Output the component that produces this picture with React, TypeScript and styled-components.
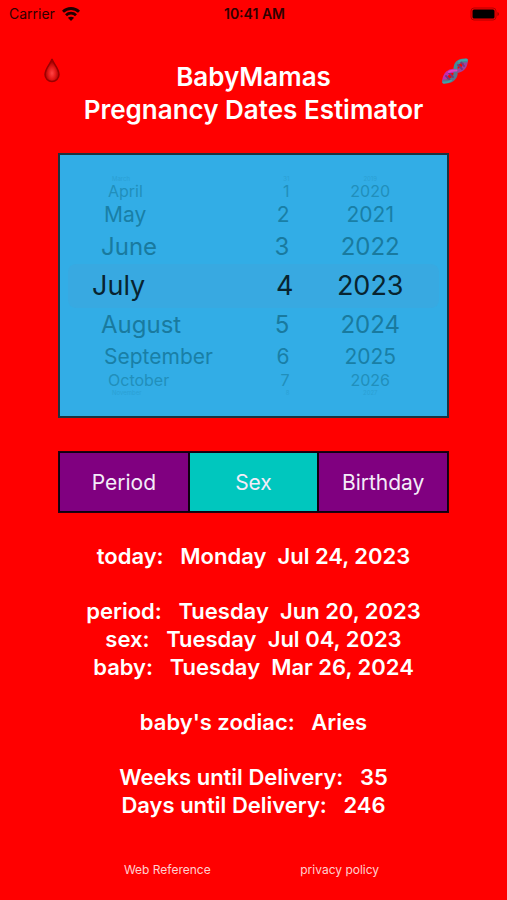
import React, { useState } from "react";
import styled, { createGlobalStyle } from "styled-components";

const GlobalStyle = createGlobalStyle`
  *, *::before, *::after { box-sizing: border-box; }
  body {
    margin: 0;
    background: #ff0000;
    color: #ffffff;
    font-family: Inter, "Liberation Sans", sans-serif;
  }
  button { font-family: inherit; cursor: pointer; }
`;

const Screen = styled.div`
  display: flex;
  flex-direction: column;
  min-height: 100vh;
  background: #ff0000;
`;

const StatusBar = styled.div`
  display: grid;
  grid-template-columns: 1fr auto 1fr;
  align-items: center;
  height: 28px;
  padding: 0 7px 0 9px;
  color: #300000;
  font-size: 14px;
  line-height: 16px;
`;

const Carrier = styled.span`
  display: flex;
  align-items: center;
  gap: 7px;
`;

const Clock = styled.time`
  font-weight: 600;
`;

const Battery = styled.span`
  display: flex;
  justify-content: flex-end;
`;

const Header = styled.header`
  display: flex;
  justify-content: space-between;
  align-items: flex-start;
  padding: 27px 36px 0;
`;

const IconButton = styled.button`
  display: flex;
  flex: none;
  width: 32px;
  height: 32px;
  padding: 0;
  border: 0;
  background: none;
  align-items: center;
  justify-content: center;
`;

const Title = styled.h1`
  flex: 1;
  margin: 5px 0 0;
  text-align: center;
  white-space: nowrap;
  font-size: 26px;
  font-weight: 600;
  line-height: 33px;
`;

const TitleLine = styled.span`
  display: block;
`;

const Main = styled.main`
  display: flex;
  flex-direction: column;
  margin-top: 27px;
`;

const Picker = styled.section`
  display: grid;
  grid-template-columns: 41fr 15fr 33fr;
  margin: 0 58px;
  padding: 20px 8px 19px;
  border: 2px solid #1c3340;
  background: #32ade6;
`;

const Wheel = styled.div`
  display: flex;
  flex-direction: column;
`;

const depths = [
  { height: 44, size: 27, color: "#082430", inset: 0 },
  { height: 34, size: 24, color: "#197a9f", inset: 9 },
  { height: 30, size: 21, color: "#197fa6", inset: 12 },
  { height: 17, size: 16, color: "#218fbb", inset: 16 },
  { height: 8, size: 6, color: "#2ba0d4", inset: 20 },
];

type Align = "left" | "right" | "center";

const WheelItem = styled.button<{ $depth: number; $align: Align }>`
  display: block;
  width: 100%;
  height: ${(p) => depths[p.$depth].height}px;
  border: 0;
  padding: 0 ${(p) => (p.$align === "right" ? 8 + (p.$depth ? 4 : 0) : 0)}px 0
    ${(p) => (p.$align === "left" ? 24 + depths[p.$depth].inset : 0)}px;
  background: ${(p) => (p.$depth === 0 ? "#38a9e1" : "transparent")};
  border-radius: ${(p) =>
    p.$depth !== 0 || p.$align === "right" ? "0" : p.$align === "left" ? "8px 0 0 8px" : "0 8px 8px 0"};
  color: ${(p) => depths[p.$depth].color};
  font-size: ${(p) => depths[p.$depth].size}px;
  line-height: ${(p) => depths[p.$depth].height}px;
  text-align: ${(p) => p.$align};
  white-space: nowrap;
`;

const Segments = styled.div`
  display: grid;
  grid-template-columns: repeat(3, 1fr);
  margin: 33px 58px 0;
  border: 1px solid #200010;
`;

const Segment = styled.button<{ $active: boolean }>`
  height: 60px;
  padding: 0;
  border: 1px solid #100010;
  background: ${(p) => (p.$active ? "#00c7be" : "#800080")};
  color: #f4ecf8;
  font-size: 21px;
  font-weight: 400;
`;

const Results = styled.div`
  display: flex;
  flex-direction: column;
  gap: 27px;
  margin-top: 29px;
  text-align: center;
  font-size: 22px;
  font-weight: 600;
  line-height: 28px;
`;

const Group = styled.div`
  display: flex;
  flex-direction: column;
`;

const Line = styled.p`
  margin: 0;
  white-space: pre;
`;

const Footer = styled.footer`
  display: grid;
  grid-template-columns: 1fr 1fr;
  justify-items: center;
  margin-top: auto;
  padding: 0 16% 22px;
  font-size: 12px;
  line-height: 16px;
`;

const FooterLink = styled.a`
  color: #ffd0d0;
  text-decoration: none;
`;

const wheels: { label: string; align: Align; items: string[] }[] = [
  {
    label: "Month",
    align: "left",
    items: ["March", "April", "May", "June", "July", "August", "September", "October", "November"],
  },
  { label: "Day", align: "right", items: ["31", "1", "2", "3", "4", "5", "6", "7", "8"] },
  {
    label: "Year",
    align: "center",
    items: ["2019", "2020", "2021", "2022", "2023", "2024", "2025", "2026", "2027"],
  },
];

const groups = [
  ["today:   Monday  Jul 24, 2023"],
  ["period:   Tuesday  Jun 20, 2023", "sex:   Tuesday  Jul 04, 2023", "baby:   Tuesday  Mar 26, 2024"],
  ["baby's zodiac:   Aries"],
  ["Weeks until Delivery:   35", "Days until Delivery:   246"],
];

const WifiIcon = () => (
  <svg width="18" height="14" viewBox="0 0 18 14" fill="none" stroke="#200000" strokeWidth="2.8" aria-hidden="true">
    <path d="M1 4.8C5.4.4 12.6.4 17 4.800" />
    <path d="M4 8.200c2.800-2.700 7.200-2.700 10 0" />
    <path d="M9 14 5.900 10.800c1.700-1.500 4.500-1.500 6.200 0Z" fill="#200000" stroke="none" />
  </svg>
);

const BatteryIcon = () => (
  <svg width="30" height="14" viewBox="0 0 30 14" aria-hidden="true">
    <rect x="1" y="1" width="25" height="12" rx="3" fill="none" stroke="#b00000" />
    <rect x="2.500" y="2.500" width="22" height="9" rx="1.500" fill="#000" />
    <path d="M27.500 5v4c1.800-.7 1.800-3.300 0-4Z" fill="#900000" />
  </svg>
);

const DropIcon = () => (
  <svg width="18" height="26" viewBox="0 0 18 26" aria-hidden="true">
    <defs>
      <radialGradient id="drop" cx="50%" cy="63%" r="50%">
        <stop offset="0" stopColor="#ff4545" />
        <stop offset="0.5" stopColor="#e91b1b" />
        <stop offset="1" stopColor="#a80000" />
      </radialGradient>
    </defs>
    <path
      d="M9 1C8 5 2 10.500 2 16.500a7 7 0 0 0 14 0C16 10.500 10 5 9 1Z"
      fill="url(#drop)"
      stroke="#990000"
      strokeWidth="1.500"
    />
  </svg>
);

const DnaIcon = () => (
  <svg width="30" height="30" viewBox="0 0 30 30" fill="none" strokeLinecap="round" aria-hidden="true">
    <g strokeWidth="4">
      <path d="M26 4.500C25.500 11 22 15 16 15" stroke="#a0429c" />
      <path d="M26 4.500C18 4 15 8 15.500 14.500" stroke="#438c99" />
      <path d="M15 15C9 14 5 18 4 25.500" stroke="#c52bb0" />
      <path d="M15.500 15.500C16.500 21 12 26 4 25.500" stroke="#58778f" />
    </g>
    <g stroke="#703b80" strokeWidth="1.800">
      <path d="m18 9 4 4M21 6l3 4M6 20l4 4M9 17l4 4" />
    </g>
    <path d="M3.500 26.500c3 .2 5-.3 7.500-2M19 5.500c2-1.500 5-1.800 7.500-1.500" stroke="#42a6a5" strokeWidth="2" />
    <path d="M9 16c2-1.700 4.500-1.500 7.500-1.500" stroke="#e044c8" strokeWidth="2" />
  </svg>
);

export default function App() {
  const [mode, setMode] = useState("Sex");
  return (
    <Screen>
      <GlobalStyle />
      <StatusBar>
        <Carrier>
          Carrier
          <WifiIcon />
        </Carrier>
        <Clock>10:41 AM</Clock>
        <Battery>
          <BatteryIcon />
        </Battery>
      </StatusBar>
      <Header>
        <IconButton aria-label="Period information">
          <DropIcon />
        </IconButton>
        <Title>
          <TitleLine>BabyMamas</TitleLine>
          <TitleLine>Pregnancy Dates Estimator</TitleLine>
        </Title>
        <IconButton aria-label="Genetics information">
          <DnaIcon />
        </IconButton>
      </Header>
      <Main>
        <Picker aria-label="Date">
          {wheels.map((wheel) => (
            <Wheel key={wheel.label} role="group" aria-label={wheel.label}>
              {wheel.items.map((item, i) => (
                <WheelItem key={item} $depth={Math.abs(i - 4)} $align={wheel.align} aria-pressed={i === 4}>
                  {item}
                </WheelItem>
              ))}
            </Wheel>
          ))}
        </Picker>
        <Segments role="group" aria-label="Date type">
          {["Period", "Sex", "Birthday"].map((name) => (
            <Segment key={name} $active={mode === name} aria-pressed={mode === name} onClick={() => setMode(name)}>
              {name}
            </Segment>
          ))}
        </Segments>
        <Results>
          {groups.map((lines) => (
            <Group key={lines[0]}>
              {lines.map((line) => (
                <Line key={line}>{line}</Line>
              ))}
            </Group>
          ))}
        </Results>
      </Main>
      <Footer>
        <FooterLink href="#reference">Web Reference</FooterLink>
        <FooterLink href="#privacy">privacy policy</FooterLink>
      </Footer>
    </Screen>
  );
}
